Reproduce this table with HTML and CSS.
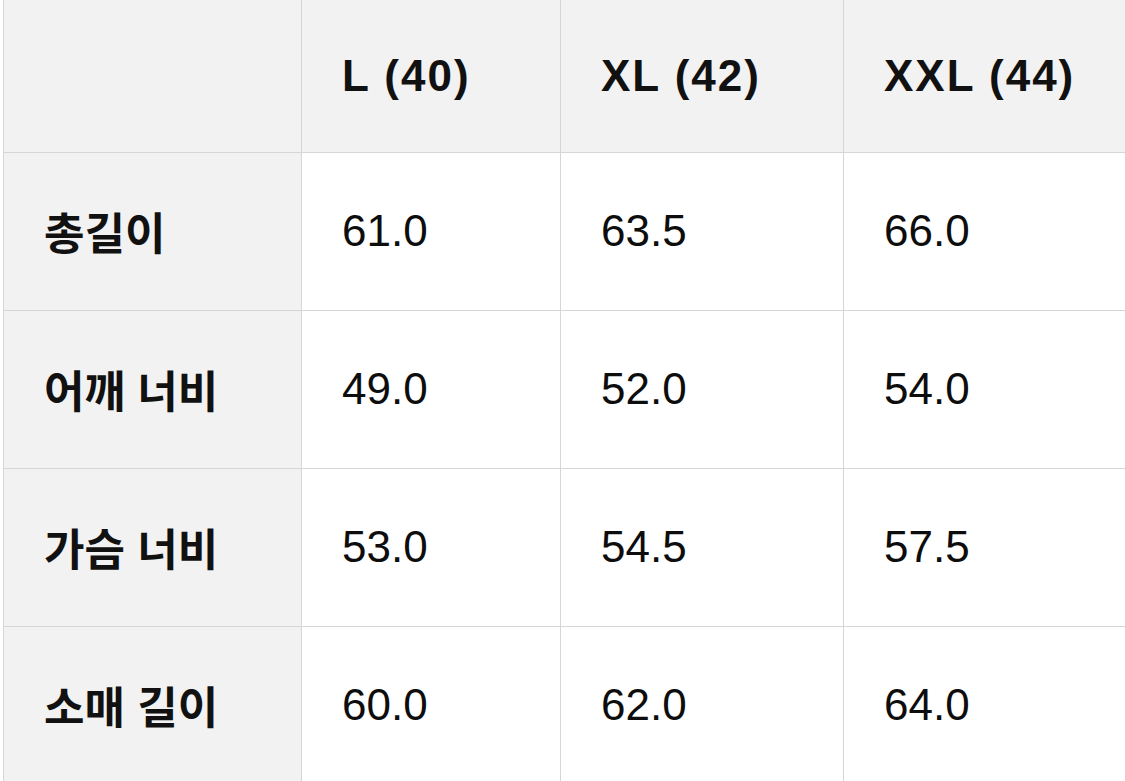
FILE: index.html
```html
<!DOCTYPE html>
<html lang="ko">
<head>
<meta charset="utf-8">
<link rel="stylesheet" href="styles.css">
</head>
<body>
<table class="size-table">
  <colgroup>
    <col class="c-label">
    <col class="c-l">
    <col class="c-xl">
    <col class="c-xxl">
  </colgroup>
  <thead>
    <tr class="head-row">
      <th class="label-cell"></th>
      <th>L (40)</th>
      <th>XL (42)</th>
      <th>XXL (44)</th>
    </tr>
  </thead>
  <tbody>
    <tr class="body-row">
      <th class="label-cell">총길이</th>
      <td>61.0</td>
      <td>63.5</td>
      <td>66.0</td>
    </tr>
    <tr class="body-row">
      <th class="label-cell">어깨 너비</th>
      <td>49.0</td>
      <td>52.0</td>
      <td>54.0</td>
    </tr>
    <tr class="body-row">
      <th class="label-cell">가슴 너비</th>
      <td>53.0</td>
      <td>54.5</td>
      <td>57.5</td>
    </tr>
    <tr class="body-row">
      <th class="label-cell">소매 길이</th>
      <td>60.0</td>
      <td>62.0</td>
      <td>64.0</td>
    </tr>
  </tbody>
</table>
</body>
</html>
```
FILE: styles.css
```css
html, body {
  margin: 0;
  padding: 0;
  background: #ffffff;
  overflow: hidden;
  width: 1125px;
  height: 781px;
}

body {
  padding-left: 3px;
  font-family: "Liberation Sans", "Noto Sans CJK KR", Arial, sans-serif;
  color: #111111;
}

.size-table {
  border-collapse: collapse;
  table-layout: fixed;
  width: 1140px;
}

.c-label { width: 298px; }
.c-l { width: 259px; }
.c-xl { width: 283px; }
.c-xxl { width: 300px; }

.size-table th,
.size-table td {
  border: 1px solid #d6d6d6;
  border-top: none;
  padding: 0 0 0 40px;
  text-align: left;
  vertical-align: middle;
  font-size: 44px;
  white-space: nowrap;
}

.size-table td {
  font-weight: 400;
  background: #ffffff;
  color: #0d0d0d;
}

.size-table th {
  font-weight: 700;
}

.head-row {
  height: 152px;
}

.head-row th {
  background: #f2f2f2;
  letter-spacing: 2px;
}

.body-row {
  height: 158px;
}

.label-cell {
  background: #f2f2f2;
  font-size: 41px;
  letter-spacing: 0;
}
```
